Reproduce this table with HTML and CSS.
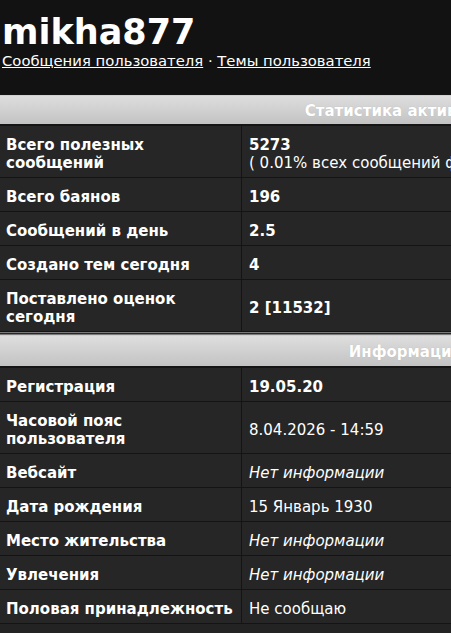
FILE: index.html
```html
<!DOCTYPE html>
<html lang="ru">
<head>
<meta charset="utf-8">
<link rel="stylesheet" href="styles.css">
</head>
<body>
<div class="page">
  <header class="profile-head">
    <h1 class="username">mikha877</h1>
    <div class="links"><a href="#">Сообщения пользователя</a> · <a href="#">Темы пользователя</a></div>
  </header>
  <div class="tables">
    <table class="info">
      <tr><th colspan="2">Статистика активности</th></tr>
      <tr><td class="label">Всего полезных сообщений</td><td class="val"><b>5273</b><br>( 0.01% всех сообщений форума / 0.9 сообщений в день )</td></tr>
      <tr><td class="label">Всего баянов</td><td class="val"><b>196</b></td></tr>
      <tr><td class="label">Сообщений в день</td><td class="val"><b>2.5</b></td></tr>
      <tr><td class="label">Создано тем сегодня</td><td class="val"><b>4</b></td></tr>
      <tr><td class="label">Поставлено оценок сегодня</td><td class="val"><b>2 [11532]</b></td></tr>
    </table>
    <table class="info second">
      <tr><th colspan="2">Информация</th></tr>
      <tr><td class="label">Регистрация</td><td class="val"><b>19.05.20</b></td></tr>
      <tr><td class="label">Часовой пояс пользователя</td><td class="val">8.04.2026 - 14:59</td></tr>
      <tr><td class="label">Вебсайт</td><td class="val"><i>Нет информации</i></td></tr>
      <tr><td class="label">Дата рождения</td><td class="val">15 Январь 1930</td></tr>
      <tr><td class="label">Место жительства</td><td class="val"><i>Нет информации</i></td></tr>
      <tr><td class="label">Увлечения</td><td class="val"><i>Нет информации</i></td></tr>
      <tr><td class="label">Половая принадлежность</td><td class="val">Не сообщаю</td></tr>
    </table>
  </div>
</div>
</body>
</html>
```
FILE: styles.css
```css
html, body {
  margin: 0;
  padding: 0;
  background: #232323;
  overflow: hidden;
}
body {
  font-family: "DejaVu Sans", Verdana, sans-serif;
  color: #fff;
  font-size: 15px;
}
.page {
  width: 451px;
  height: 633px;
  overflow: hidden;
  background: #232323;
}
.profile-head {
  background: #121212;
  padding: 13px 2px 0;
  height: 81px;
}
.username {
  margin: 0;
  font-size: 35px;
  line-height: 39px;
  font-weight: bold;
}
.links {
  line-height: 18px;
  font-size: 14.8px;
}
.links a {
  color: #fff;
  text-decoration: underline;
}
.tables {
  width: 810px;
}
.info {
  width: 810px;
  border-collapse: collapse;
  border-top: 1px solid #7a7a7a;
  background: #262626;
}
.info th {
  height: 27px;
  padding: 2px 0 0;
  border-top: 1px solid #151515;
  border-bottom: 2px solid #151515;
  background: linear-gradient(#dedede, #c2c2c2);
  color: #fff;
  font-weight: bold;
  font-size: 15px;
  text-align: center;
  text-shadow: 0 0 1px rgba(0,0,0,0.15);
}
.second th {
  height: 29px;
}
.info td {
  padding: 10px 6px 5px;
  line-height: 18px;
  border-bottom: 1px solid #141414;
  vertical-align: middle;
  text-align: left;
}
.info td.label {
  width: 229px;
  font-weight: bold;
  border-right: 1px solid #141414;
}
.info td.val {
  padding-left: 7px;
  white-space: nowrap;
}
.info + .info {
  border-top: 3px double #7a7a7a;
}
```
